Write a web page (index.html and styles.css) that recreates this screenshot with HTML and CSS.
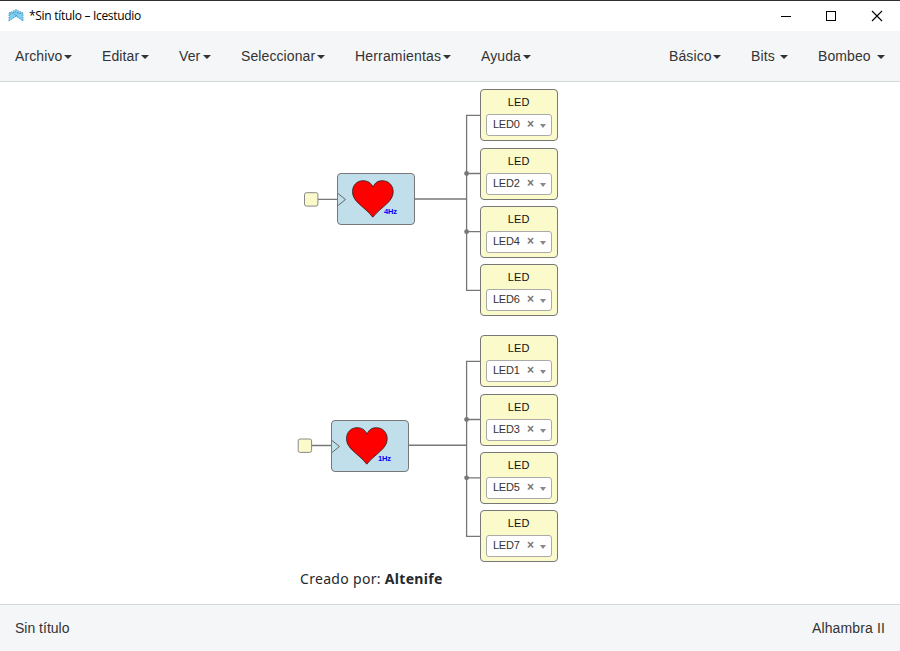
FILE: index.html
```html
<!DOCTYPE html>
<html lang="es">
<head>
<meta charset="utf-8">
<title>*Sin título – Icestudio</title>
<link rel="stylesheet" href="styles.css">
</head>
<body>
<header class="titlebar">
  <svg class="logo" width="16" height="16" viewBox="0 0 16 16">
    <path d="M1 4.500L5 3.500 8 1.500l3 2 4 1V13l-4-2.500-3-2-3 2L1 13z" fill="#7fd0f5"/>
    <path d="M1 13V5l3-1.500 4-2 4 2L15 5v8M1 13l4-3 3-2 3 2 4 3M2 6l6-2 6 2M5 4l3 4 3-4" fill="none" stroke="#3f84a8" stroke-width=".8" stroke-dasharray="1.500 1"/>
  </svg>
  <span class="title">*Sin título – Icestudio</span>
  <svg class="controls" width="104" height="12" viewBox="0 0 104 12" fill="none" stroke="#000" shape-rendering="crispEdges">
    <path d="M0 6.500h10M45.500 1.500h9v9h-9z"/>
    <path d="M91 1l10 10M101 1L91 11" shape-rendering="auto" stroke-width="1.100"/>
  </svg>
</header>
<nav class="menubar">
  <div class="group">
    <a class="item archivo"><span>Archivo</span><i class="caret"></i></a>
    <a class="item editar"><span>Editar</span><i class="caret"></i></a>
    <a class="item ver"><span>Ver</span><i class="caret"></i></a>
    <a class="item seleccionar"><span>Seleccionar</span><i class="caret"></i></a>
    <a class="item herramientas"><span>Herramientas</span><i class="caret"></i></a>
    <a class="item ayuda"><span>Ayuda</span><i class="caret"></i></a>
  </div>
  <div class="group">
    <a class="item basico"><span>Básico</span><i class="caret"></i></a>
    <a class="item bits"><span>Bits</span><i class="caret"></i></a>
    <a class="item bombeo"><span>Bombeo</span><i class="caret"></i></a>
  </div>
</nav>
<main class="canvas">
  <svg class="wires" width="900" height="522" viewBox="0 82 900 522">
    <g fill="none" stroke="#777" stroke-width="1.300">
      <path d="M318 199.300h20M311 445.500h20"/>
      <path d="M415 199h52M409 445.200h58" stroke-width="1.500"/>
      <path d="M480 115.300h-13.400v175h13.400M466.600 173.500H480M466.600 231.700H480"/>
      <path d="M480 361.300h-13.400v175h13.400M466.600 419.500H480M466.600 477.800H480"/>
    </g>
    <g fill="#777"><circle cx="466.600" cy="173.500" r="2.400"/><circle cx="466.600" cy="231.700" r="2.400"/><circle cx="466.600" cy="419.500" r="2.400"/><circle cx="466.600" cy="477.800" r="2.400"/></g>
    <g fill="#fafaca" stroke="#888"><rect x="304.500" y="192.700" width="13.400" height="13.400" rx="2"/><rect x="298.200" y="439" width="13.400" height="13.400" rx="2"/></g>
  </svg>
  <div class="clock four"><svg width="76" height="50" viewBox="0 0 76 50">
    <path d="M0 19.500l7.500 6L0 31.500" fill="none" stroke="#666"/>
    <path d="M35 13C37 8.500 40 6.700 44.500 6.700c6 0 10.700 4.500 10.700 11C55.200 28 44 32 34.800 43.200 26 32 14.500 28 14.500 17.700c0-6.500 4.500-11 10.500-11 4.500 0 8 2 10 6.300z" fill="#f00" stroke="#222" stroke-width=".8"/>
  </svg><b>4Hz</b></div>
  <div class="clock one"><svg width="76" height="50" viewBox="0 0 76 50">
    <path d="M0 19.500l7.500 6L0 31.500" fill="none" stroke="#666"/>
    <path d="M35 13C37 8.500 40 6.700 44.500 6.700c6 0 10.700 4.500 10.700 11C55.200 28 44 32 34.800 43.200 26 32 14.500 28 14.500 17.700c0-6.500 4.500-11 10.500-11 4.500 0 8 2 10 6.300z" fill="#f00" stroke="#222" stroke-width=".8"/>
  </svg><b>1Hz</b></div>
  <div class="led led0"><span>LED</span><div class="select"><span>LED0</span><b>×</b><i></i></div></div>
  <div class="led led2"><span>LED</span><div class="select"><span>LED2</span><b>×</b><i></i></div></div>
  <div class="led led4"><span>LED</span><div class="select"><span>LED4</span><b>×</b><i></i></div></div>
  <div class="led led6"><span>LED</span><div class="select"><span>LED6</span><b>×</b><i></i></div></div>
  <div class="led led1"><span>LED</span><div class="select"><span>LED1</span><b>×</b><i></i></div></div>
  <div class="led led3"><span>LED</span><div class="select"><span>LED3</span><b>×</b><i></i></div></div>
  <div class="led led5"><span>LED</span><div class="select"><span>LED5</span><b>×</b><i></i></div></div>
  <div class="led led7"><span>LED</span><div class="select"><span>LED7</span><b>×</b><i></i></div></div>
  <div class="note">Creado por: <strong>Altenife</strong></div>
</main>
<footer class="footer"><span>Sin título</span><span class="board">Alhambra II</span></footer>
</body>
</html>
```
FILE: styles.css
```css
* { box-sizing: border-box; }
body {
  margin: 0; width: 900px; height: 651px; overflow: hidden;
  display: flex; flex-direction: column; background: #fff;
  color: #333; font: 14px/20px "Liberation Sans", Arial, sans-serif;
}
.titlebar {
  height: 31px; flex: none; display: flex; align-items: center;
  border-top: 1px solid #332f2f; padding: 0 15px 0 8px; color: #000;
}
.title { margin-left: 5px; font: 12px/16px "Open Sans", sans-serif; letter-spacing: -.3px; }
.controls { margin-left: auto; }
.menubar {
  height: 51px; flex: none; display: flex; align-items: center; justify-content: space-between;
  padding: 0 15px; background: #f4f6f8; border-bottom: 1px solid #d2d9d9;
}
.group { display: flex; gap: 30px; }
.item { display: flex; align-items: center; justify-content: space-between; letter-spacing: .1px; }
.archivo { width: 57px; }
.editar { width: 47px; }
.ver { width: 32px; }
.seleccionar { width: 84px; }
.herramientas { width: 96px; letter-spacing: .17px; }
.ayuda { width: 50px; }
.basico { width: 52px; }
.bits { width: 37px; }
.bombeo { width: 67px; }
.caret { border: 4px solid transparent; border-top-color: #333; border-bottom: 0; margin-top: 1px; }
.canvas { height: 522px; flex: none; position: relative; }
.wires { position: absolute; left: 0; top: 0; }
.clock {
  position: absolute; width: 78px; height: 52px; background: #c0dfeb;
  border: 1px solid #777; border-radius: 4px;
}
.clock svg { display: block; }
.clock b { position: absolute; left: 46px; top: 33px; color: #00f; font: bold 7.500px/10px "Liberation Sans", sans-serif; letter-spacing: -.15px; }
.four { left: 337px; top: 91px; }
.one { left: 331px; top: 338px; }
.led {
  position: absolute; left: 480px; width: 78px; height: 52px; padding: 5px 5px 0 4.500px;
  border: 1px solid #777; border-radius: 4px; background: #fafaca;
  color: #111; font-size: 11px; line-height: 14px; text-align: center;
}
.led0 { top: 7px; }
.led2 { top: 66px; }
.led4 { top: 124px; }
.led6 { top: 182px; }
.led1 { top: 253px; }
.led3 { top: 312px; }
.led5 { top: 370px; }
.led7 { top: 428px; }
.led > span { display: block; letter-spacing: .2px; }
.select {
  height: 22px; margin-top: 5px; padding: 0 5px 2px 6.500px; display: flex; align-items: center;
  background: #fff; border: 1px solid #aaa; border-radius: 3px; color: #333;
}
.select span { width: 34px; text-align: left; letter-spacing: -.25px; }
.select b { width: 9px; color: #777; font-size: 12px; }
.select i { margin: 3px 0 0 5px; border: 3px solid transparent; border-top: 4px solid #888; border-bottom: 0; }
.note { position: absolute; left: 300px; top: 487px; color: #24292e; font: 14px/20px "Noto Sans", sans-serif; letter-spacing: .31px; }
.footer {
  height: 47px; display: flex; align-items: center; justify-content: space-between;
  padding: 0 15px; background: #f4f6f8; border-top: 1px solid #d2d9d9;
}
.board { letter-spacing: .13px; }
```
